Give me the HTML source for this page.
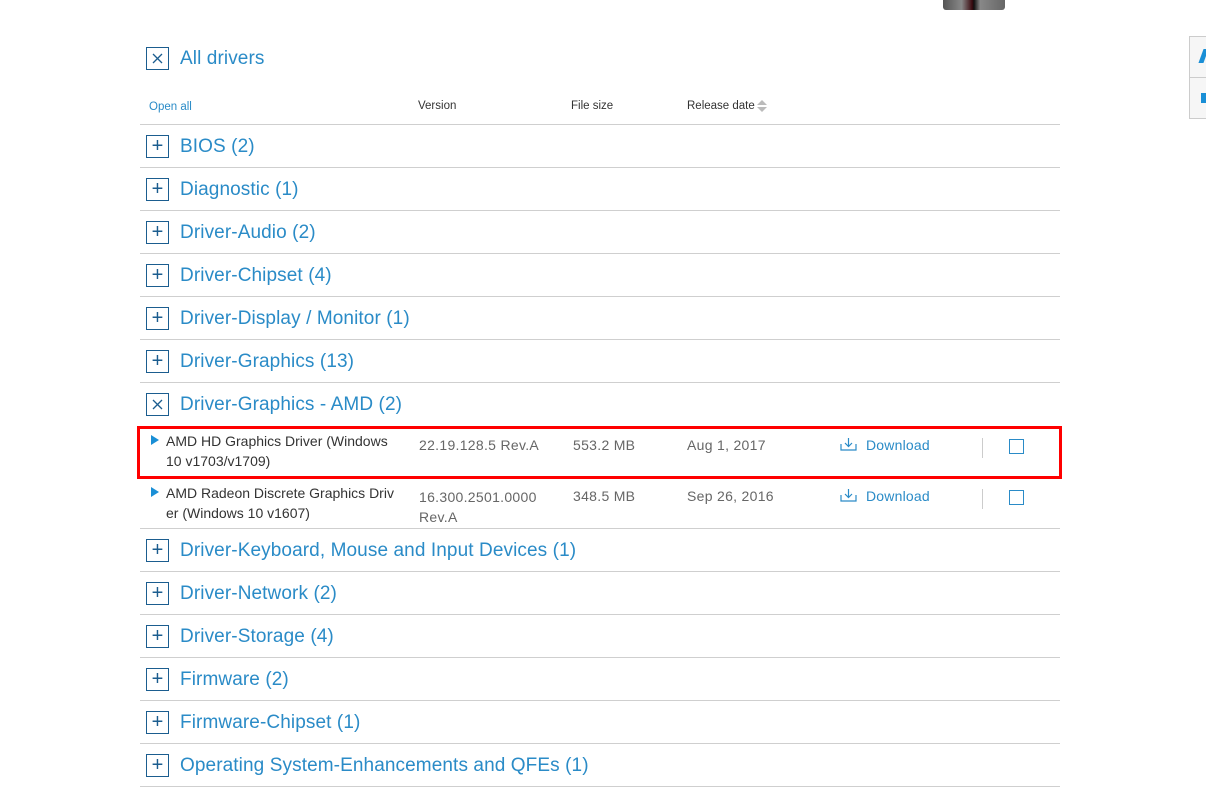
<!DOCTYPE html>
<html><head><meta charset="utf-8"><style>
*{margin:0;padding:0;box-sizing:border-box}
body{width:1206px;height:788px;background:#fff;position:relative;overflow:hidden;font-family:"Liberation Sans",sans-serif;}
.a{position:absolute;white-space:nowrap}
.box{position:absolute;left:146px;width:23px;height:23px;border:1px solid #1b5d8f;color:#1b5d8f;font-size:20px;line-height:20px;text-align:center}
.cat{position:absolute;left:180px;font-size:19px;color:#2a8bc7;letter-spacing:0.1px}
.line{position:absolute;left:140px;width:920px;height:1px;background:#cfcfcf}
.hd{font-size:11.5px;color:#333}
.sub{font-size:14px;color:#333;letter-spacing:0px}
.g{font-size:14px;color:#666;letter-spacing:0.3px}
.dl{font-size:14px;color:#2a8bc7;letter-spacing:0.2px}
.cb{position:absolute;left:1009px;width:15px;height:15px;border:1.5px solid #2a8bc7}
.vs{position:absolute;left:982px;width:1px;height:20px;background:#ccc}
.tri{position:absolute;left:151px;width:0;height:0;border-left:8px solid #1a8fd6;border-top:5px solid transparent;border-bottom:5px solid transparent}
</style></head><body>
<div class="a" style="left:943px;top:0;width:62px;height:10px;background:linear-gradient(90deg,#555,#888 30%,#3a0a10 47%,#111 50%,#888 60%,#666);border-radius:0 0 3px 3px"></div>
<div class="a" style="left:1189px;top:36px;width:20px;height:83px;border:1px solid #ccc;background:#f6f6f6"></div>
<div class="a" style="left:1189px;top:77px;width:20px;height:1px;background:#ccc"></div>
<div class="a" style="left:1201px;top:49px;width:5px;height:14px;background:#1a8fd6;transform:skewX(-20deg)"></div>
<div class="a" style="left:1201px;top:93px;width:5px;height:10px;background:#1a8fd6"></div>

<div class="box" style="top:47px"><svg width="21" height="21" style="display:block"><path d="M6 6l9 9M15 6l-9 9" stroke="#1b5d8f" stroke-width="1.3"/></svg></div>
<div class="cat" style="top:48px">All drivers</div>
<div class="a hd" style="left:149px;top:101px;color:#2a8bc7">Open all</div>
<div class="a hd" style="left:418px;top:100px">Version</div>
<div class="a hd" style="left:571px;top:100px">File size</div>
<div class="a hd" style="left:687px;top:100px">Release date</div>
<div class="a" style="left:757px;top:100px;width:0;height:0;border-left:5px solid transparent;border-right:5px solid transparent;border-bottom:5px solid #bbb"></div>
<div class="a" style="left:757px;top:107px;width:0;height:0;border-left:5px solid transparent;border-right:5px solid transparent;border-top:5px solid #bbb"></div>

<div class="line" style="top:124px"></div>
<div class="box" style="top:135px">+</div><div class="cat" style="top:136px">BIOS (2)</div>
<div class="line" style="top:167px"></div>
<div class="box" style="top:178px">+</div><div class="cat" style="top:179px">Diagnostic (1)</div>
<div class="line" style="top:210px"></div>
<div class="box" style="top:221px">+</div><div class="cat" style="top:222px">Driver-Audio (2)</div>
<div class="line" style="top:253px"></div>
<div class="box" style="top:264px">+</div><div class="cat" style="top:265px">Driver-Chipset (4)</div>
<div class="line" style="top:296px"></div>
<div class="box" style="top:307px">+</div><div class="cat" style="top:308px">Driver-Display / Monitor (1)</div>
<div class="line" style="top:339px"></div>
<div class="box" style="top:350px">+</div><div class="cat" style="top:351px">Driver-Graphics (13)</div>
<div class="line" style="top:382px"></div>
<div class="box" style="top:393px"><svg width="21" height="21" style="display:block"><path d="M6 6l9 9M15 6l-9 9" stroke="#1b5d8f" stroke-width="1.3"/></svg></div><div class="cat" style="top:394px">Driver-Graphics - AMD (2)</div>

<div class="tri" style="top:435px"></div>
<div class="a sub" style="left:166px;top:431px;line-height:20px">AMD HD Graphics Driver (Windows<br>10 v1703/v1709)</div>
<div class="a g" style="left:419px;top:437px">22.19.128.5 Rev.A</div>
<div class="a g" style="left:573px;top:437px">553.2 MB</div>
<div class="a g" style="left:687px;top:437px">Aug 1, 2017</div>
<svg class="a" style="left:840px;top:437px" width="17" height="14"><path d="M1 7v6h15V7M8.5 1v8M5 6l3.5 3.5L12 6" fill="none" stroke="#2a8bc7" stroke-width="1.2"/></svg>
<div class="a dl" style="left:866px;top:437px">Download</div>
<div class="vs" style="top:438px"></div>
<div class="cb" style="top:439px"></div>

<div class="tri" style="top:487px"></div>
<div class="a sub" style="left:166px;top:483px;line-height:20px">AMD Radeon Discrete Graphics Driv<br>er (Windows 10 v1607)</div>
<div class="a g" style="left:419px;top:487px;line-height:20px">16.300.2501.0000<br>Rev.A</div>
<div class="a g" style="left:573px;top:488px">348.5 MB</div>
<div class="a g" style="left:687px;top:488px">Sep 26, 2016</div>
<svg class="a" style="left:840px;top:488px" width="17" height="14"><path d="M1 7v6h15V7M8.5 1v8M5 6l3.5 3.5L12 6" fill="none" stroke="#2a8bc7" stroke-width="1.2"/></svg>
<div class="a dl" style="left:866px;top:488px">Download</div>
<div class="vs" style="top:489px"></div>
<div class="cb" style="top:490px"></div>

<div class="a" style="left:137px;top:426px;width:925px;height:53px;border:3px solid #f00"></div>

<div class="line" style="top:528px"></div>
<div class="box" style="top:539px">+</div><div class="cat" style="top:540px">Driver-Keyboard, Mouse and Input Devices (1)</div>
<div class="line" style="top:571px"></div>
<div class="box" style="top:582px">+</div><div class="cat" style="top:583px">Driver-Network (2)</div>
<div class="line" style="top:614px"></div>
<div class="box" style="top:625px">+</div><div class="cat" style="top:626px">Driver-Storage (4)</div>
<div class="line" style="top:657px"></div>
<div class="box" style="top:668px">+</div><div class="cat" style="top:669px">Firmware (2)</div>
<div class="line" style="top:700px"></div>
<div class="box" style="top:711px">+</div><div class="cat" style="top:712px">Firmware-Chipset (1)</div>
<div class="line" style="top:743px"></div>
<div class="box" style="top:754px">+</div><div class="cat" style="top:755px">Operating System-Enhancements and QFEs (1)</div>
<div class="line" style="top:786px"></div>
</body></html>
